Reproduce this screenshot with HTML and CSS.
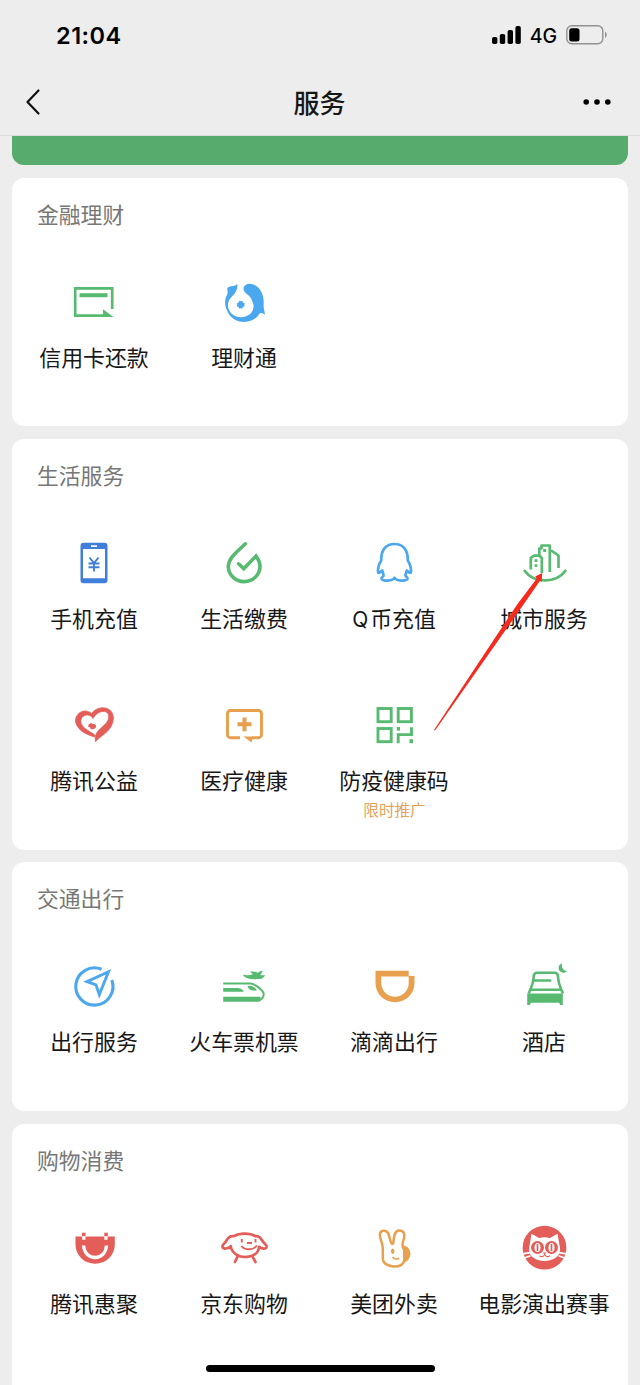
FILE: index.html
```html
<!DOCTYPE html>
<html lang="zh-CN">
<head>
<meta charset="utf-8">
<title>服务</title>
<link rel="stylesheet" href="styles.css">
</head>
<body>
<div class="screen">
  <header class="header">
    <div class="status">
      <span class="time">21:04</span>
      <div class="status-right">
        <svg class="signal" width="30" height="20" viewBox="0 0 30 20"><rect x="0" y="12" width="5.4" height="7" rx="1.8"/><rect x="7.8" y="9" width="5.4" height="10" rx="1.8"/><rect x="15.6" y="5" width="5.4" height="14" rx="1.8"/><rect x="23.4" y="1" width="5.4" height="18" rx="1.8"/></svg>
        <span class="network">4G</span>
        <svg class="battery" width="42" height="20" viewBox="0 0 42 20"><rect x=".8" y=".8" width="36" height="18" rx="5" fill="none" stroke="#929292" stroke-width="1.4"/><rect x="3.2" y="3.2" width="10.3" height="13.2" rx="2.5"/><path d="M39 6.500c2.300 1.500 2.300 5 0 6.500z" fill="#929292"/></svg>
      </div>
    </div>
    <div class="nav">
      <svg class="back" width="16" height="28" viewBox="0 0 16 28"><path d="M13.500 2.500 2.500 14l11 11.500" fill="none" stroke="#111" stroke-width="2.200" stroke-linecap="round" stroke-linejoin="round"/></svg>
      <h1 class="title">服务</h1>
      <svg class="more" width="30" height="8" viewBox="0 0 30 8"><circle cx="4.200" cy="4" r="2.800"/><circle cx="15" cy="4" r="2.800"/><circle cx="25.800" cy="4" r="2.800"/></svg>
    </div>
  </header>

  <main class="content">
    <div class="banner"></div>

    <section class="card">
      <h2 class="card-title">金融理财</h2>
      <div class="grid">
        <div class="item">
          <svg class="icon green" viewBox="0 0 48 48"><path d="M42.200 31V10.300H5.200V37.700H34" class="line" stroke-width="2.700"/><path d="M9.500 17.200H37.500" class="line" stroke-width="4"/><path d="M33 31.300 43.500 38.900H33z"/></svg>
          <span class="label">信用卡还款</span>
        </div>
        <div class="item">
          <svg class="icon sky" viewBox="0 0 48 48"><path d="M17.200 6C14 9 10 7.500 7.800 9.500 6.500 11.500 8.500 14 7 17 4.500 21 4.500 27 7 32.500 10 40 17 44.200 24.500 44c6.500 0 12.500-3.500 15.500-9 1.500-.3 3.500 0 4.800 2C45 33 43.500 31 43.600 27 44.500 17 40 7 30 5.800 25 5.500 22.500 9.500 24 12.800c1.500 3.200 6.500 4.700 8 9.700.5 2 2 4 1.500 6.500C33 35 27.500 39.300 21 39.300 13.500 39.300 8 34 8 27.500 8 20.500 13 18.500 15.200 14.500 17 12 17.800 9 17.200 6z"/><path d="M19 23.300h3.400v1.700h1.700v3.400h-1.700v1.700H19v-1.700h-1.700V25H19z" stroke="currentColor" stroke-width=".6" stroke-linejoin="round"/></svg>
          <span class="label">理财通</span>
        </div>
      </div>
    </section>

    <section class="card card-tall">
      <h2 class="card-title">生活服务</h2>
      <div class="grid">
        <div class="item">
          <svg class="icon blue" viewBox="0 0 48 48"><path fill-rule="evenodd" d="M13.500 3.800h21a3 3 0 0 1 3 3v34.400a3 3 0 0 1-3 3h-21a3 3 0 0 1-3-3V6.800a3 3 0 0 1 3-3zM13 10v29.200h22V10zM21 6.200v1.700h6V6.200z"/><path class="line" stroke-width="1.900" d="m19.500 18.500 4.500 5.700 4.500-5.700M18.500 24.500h11M18.500 28.200h11M24 24v8.500"/></svg>
          <span class="label">手机充值</span>
        </div>
        <div class="item">
          <svg class="icon green" viewBox="0 0 48 48"><path class="line" stroke-width="3.600" stroke-linecap="round" d="M25.300 4.800C18.500 11.800 8.300 18.300 8.300 28A15.800 15.200 0 0 0 24.200 42.600 15.800 15.200 0 0 0 40 27.800C40 23.500 38.200 20 36 17L23.800 29.800 18.600 24.800"/></svg>
          <span class="label">生活缴费</span>
        </div>
        <div class="item">
          <svg class="icon sky" viewBox="0 0 48 48"><path class="line" stroke-width="2.700" stroke-linecap="round" stroke-linejoin="round" d="M12.300 31.500C10.500 33 9.200 34.200 8.300 33.800 7.300 31.500 8.500 25.500 11.200 21.500 11 11 15.500 5 24.500 5s13.500 6 13.300 16.500c2.700 4 3.900 10 2.900 12.300-.9.400-2.200-.8-4-2.300M12.500 32c.2 2.300 1.200 3.500 1 4.500-.3 1.600-2.400 1.200-2 3.300.5 2.200 8.500 2.700 12 .2l1-1.300 1 1.300c3.500 2.500 11.500 2 12-.2.400-2.100-1.700-1.700-2-3.300-.2-1 .8-2.200 1-4.500"/></svg>
          <span class="label"><span class="latin">Q</span>币充值</span>
        </div>
        <div class="item anchor">
          <svg class="icon green" viewBox="0 0 48 48"><g class="line" stroke-width="2.700" stroke-linejoin="round"><path d="M10.800 30.500V18.800L14 16.700h5.500l2.300 2.300V34"/><path d="M19.300 16.500V9.500h2.200V6.500h8.300v26.500M30.500 11.800 32 12l6.500 4.500V29"/><path d="M4.700 31.800C13 44 36 45 45.400 31.800" stroke-linecap="round"/></g><rect x="23.200" y="10" width="3" height="3"/><rect x="14.600" y="20.200" width="2.800" height="2.800"/><rect x="14.600" y="25.200" width="2.800" height="2.800"/></svg>
          <span class="label">城市服务</span>
          <svg class="arrow" width="112" height="160" viewBox="0 0 112 160"><path d="M0 158 83.500 32 102.800 6.500 101.300 4.500 108.200 1 107.700 10 106 8.700 88.500 34 1 158.500z" fill="#f52a1c"/></svg>
        </div>
        <div class="item">
          <svg class="icon red" viewBox="0 0 48 48"><path d="M25.500 40.700C24.500 35.500 26 32 29 29 33 25 38.500 21.500 38.700 16 38.800 12 36.500 10.500 33 10.500 29 10.500 25.500 13.500 23 17.500 21 13.500 15 12.500 12 16.500c-2.500 4-.5 8 3 11C18 30 22 31.500 25 34.200L24.500 36C17 33.800 8.500 29.800 6 22.500 3.800 15.500 9.500 10 15 10c2.500 0 4.800.9 6.700 2.400C25 7.500 32 5.500 37 7.500c6.300 2.500 7.800 8.700 5.200 15.500C39.500 31 31 34.500 25.500 40.700z" stroke="currentColor" stroke-width=".7"/><path d="M18.500 24c1-2 3.500-2.500 4.500-.8 1.700-.8 3.500.8 3 2.700-.6 2-3.500 2.400-5.500 2.200.2-1.800-1-2.500-2.500-2.200z"/></svg>
          <span class="label">腾讯公益</span>
        </div>
        <div class="item">
          <svg class="icon orange" viewBox="0 0 48 48"><path class="line" stroke-width="2.900" d="M20 36.700H10.500a3 3 0 0 1-3-3V12.500a3 3 0 0 1 3-3h28a3 3 0 0 1 3 3v21.200a3 3 0 0 1-3 3H32"/><path class="line" stroke-width="4" d="M17.500 23.300h14M24.500 16.500v13.700"/><path d="M23.500 35.400H33L31.500 41.500z"/></svg>
          <span class="label">医疗健康</span>
        </div>
        <div class="item">
          <svg class="icon green" viewBox="0 0 48 48"><g class="line" stroke-width="2.900"><rect x="8" y="7.500" width="13.200" height="13.200"/><rect x="28.200" y="7.500" width="13.200" height="13.200"/><rect x="8" y="27.500" width="13.200" height="13.200"/><path d="M28.200 42.200v-8.600h13.300v-7.300"/></g><rect x="26.800" y="26" width="3.200" height="3.600"/><rect x="39.500" y="38.200" width="3.500" height="4"/></svg>
          <span class="label">防疫健康码</span>
          <span class="tag">限时推广</span>
        </div>
      </div>
    </section>

    <section class="card">
      <h2 class="card-title">交通出行</h2>
      <div class="grid">
        <div class="item">
          <svg class="icon sky" viewBox="0 0 48 48"><path class="line" stroke-width="3.100" d="M31.500 7.300A18.600 18.600 0 1 0 41.800 18"/><path class="line" stroke-width="2.900" d="M38.500 9.800 17 19.600l9 3.200 3.300 9.700z"/></svg>
          <span class="label">出行服务</span>
        </div>
        <div class="item">
          <svg class="icon green" viewBox="0 0 48 48"><path d="M22.500 12.700c4 .6 7 .8 10.500-.4l-3-2.600c3.800-.6 5.700.2 8 1C39.500 9.200 41.300 8.500 42.500 8.700c-.3 1.800-1 3-2.300 4.300 1.700.4 3.300.4 4.900.2-1.600 3.200-4.600 4.200-8.100 3.800-5 .8-11 0-14.500-4.300z"/><path class="line" stroke-width="2" d="M3.200 21.600H31C36 22.500 43.600 28.500 43.700 32.300c0 3-2.400 5.200-4.700 6.200"/><path d="M27.500 24c3-.7 7-.3 9.500 4.500-3.800.5-8.500 0-9.500-4.500zM3.200 26H18c3.200.4 5 1.600 5.700 3.700H3.200zM3.200 34.700h37.500l-1.200 5H3.200z"/></svg>
          <span class="label">火车票机票</span>
        </div>
        <div class="item">
          <svg class="icon orange" viewBox="0 0 48 48"><path d="M5.500 8.700h33.200v5.400h5.800v7a19.500 19.200 0 0 1-39 0zM11.300 14.600v6.500a13.700 13.700 0 0 0 27.400 0v-6.500z" fill-rule="evenodd"/></svg>
          <span class="label">滴滴出行</span>
        </div>
        <div class="item">
          <svg class="icon green" viewBox="0 0 48 48"><path class="line" stroke-width="2.600" d="M8.700 31.500c2.500-6 4.700-9 5-16.500 0-2.900 1-4.200 3.500-4.200h17.300c2.500 0 3.500 1.300 3.500 4.200.3 7.500 2.500 10.500 5 16.500M13.800 18.500h17.500M10.500 27.700h31"/><path d="M7.200 31.500h35.600V43h-2.500l-1.200-2.300H10.900L9.700 43H7.200z"/><path d="M42 1.300c-.8 4 1.100 7.600 5 7.600-3 3.500-8.400 1.400-8.400-2.800 0-2.500 1.500-4.200 3.400-4.800z"/></svg>
          <span class="label">酒店</span>
        </div>
      </div>
    </section>

    <section class="card card-last">
      <h2 class="card-title">购物消费</h2>
      <div class="grid">
        <div class="item">
          <svg class="icon red" viewBox="0 0 48 48"><path d="M5.500 12.500h6.700v3.200h3.300v-3.200h18.800v3.200h3.300v-3.200h7.200v8.200a19.600 19 0 0 1-39.300 0z"/><rect x="12" y="8.700" width="3.500" height="3.500"/><rect x="34.300" y="8.700" width="3.500" height="3.500"/><path d="M13.700 21.500c.7 16 22 16 22.700 0" fill="none" stroke="#fff" stroke-width="3.300"/></svg>
          <span class="label">腾讯惠聚</span>
        </div>
        <div class="item">
          <svg class="icon red" viewBox="0 0 48 48"><g class="line" stroke-width="2.700" stroke-linejoin="round" stroke-linecap="round"><path d="M14 12.200c5.500-3.500 16-3.500 21.200 0 3.300-.8 5.500 1.500 7.300 4.800 1.500 2.700 4.300 3.500 4 6-.5 2.300-5 2-7.500-.2C38.500 29.500 32.500 33 24.700 33 18 33 11.500 28.500 10.700 22.200 8.500 24.800 3.200 25.500 2.500 22.800 2 20.800 5 19.300 6.500 16.500 8.200 13.300 10.500 11.500 14 12.200z"/><path d="M17.500 32.700 15 38M32.500 32.700l3 5.300"/></g><path class="line" stroke-width="1.900" d="M21.800 15v3.500M35.500 15v3.500M27 19H32M21.500 22c3.200 4.500 12 4.500 15.300-.5"/></svg>
          <span class="label">京东购物</span>
        </div>
        <div class="item">
          <svg class="icon orange" viewBox="0 0 48 48"><path class="line" stroke-width="2.500" stroke-linejoin="round" d="M12.600 22.500C12 17.500 9.500 14 9.800 10.200c.5-4.400 6.400-4.700 8.400-.9 1.500 3 1.500 6.500 3.200 9.900.6 1.200 1.700.8 1.900-.5.700-4.500.5-11.900 5.700-12.200 4.600-.1 6.200 3.200 5 7.700-.8 3-2.400 5.800-1.300 8.800 3 4 3.300 10 1.300 14.500-1.500 3.300-5.500 5.100-9.500 5.100-5.500-.3-10.800-2.700-11.500-6.600-.5-4.500.1-8.500-.4-13.500z"/><path d="M34 21.500c8.500 2 8.500 14.500 0 17-1.500-4.500-1.500-12.500 0-17z"/><ellipse cx="22.700" cy="27.300" rx="1.700" ry="2.700"/><path class="line" stroke-width="1.600" d="M22.500 33c1.500 2 4.300 2.700 6.700 1.200"/></svg>
          <span class="label">美团外卖</span>
        </div>
        <div class="item">
          <svg class="icon red" viewBox="0 0 48 48"><circle cx="24.500" cy="23.700" r="21.900"/><path fill="#fff" d="M11.500 9.700 19 14c3.500-.9 7.500-.9 11 0l7.500-4.300L40 24c1 8-6.500 13-15.500 13S8 32 9.200 24z"/><path d="M2.500 29.800 10 28.700M3.500 34.200 10.500 31.700M46.500 29.800 39 28.700M45.500 34.200l-7-2.500" stroke="#fff" stroke-width="1.700"/><circle cx="17.500" cy="23.500" r="6.500"/><circle cx="31.500" cy="23.500" r="6.500"/><ellipse cx="17.500" cy="23.500" rx="3" ry="4.600" fill="#fff"/><ellipse cx="31.500" cy="23.500" rx="3" ry="4.600" fill="#fff"/><path d="M17.500 20v7M31.500 20v7" class="line" stroke-width="1.700"/><path d="M22.700 28.500h3.700l-1.800 2z"/><path class="line" stroke-width="1.100" d="M19.500 31.700c2 1.600 4 1.200 5.200-1.200 1.200 2.400 3.200 2.800 5.200 1.200"/></svg>
          <span class="label">电影演出赛事</span>
        </div>
      </div>
    </section>
  </main>
  <div class="home-indicator"></div>
</div>
</body>
</html>
```

FILE: styles.css
```css
* { box-sizing: border-box; }
body {
  margin: 0;
  background: #ededed;
  color: #171717;
  font-family: "Noto Sans CJK SC", sans-serif;
}
.screen {
  position: relative;
  width: 640px;
  height: 1385px;
  overflow: hidden;
}
.header {
  height: 136px;
  border-bottom: 1px solid #dcdcdc;
}
.status {
  display: flex;
  justify-content: space-between;
  align-items: center;
  height: 70px;
  padding: 0 32px 0 56px;
}
.time {
  margin-top: 1px;
  font: 600 23.5px/28px Inter, sans-serif;
  letter-spacing: 0.5px;
  color: #000;
}
.status-right {
  display: flex;
  align-items: center;
}
.network {
  margin: 1px 9px 0 8px;
  font: 500 19.5px/24px Inter, sans-serif;
  color: #000;
}
.nav {
  display: grid;
  grid-template-columns: 1fr auto 1fr;
  align-items: center;
  height: 64px;
  padding: 0 28px 0 25px;
}
.title {
  margin: 0 0 1px 2px;
  font-size: 26px;
  line-height: 36px;
  font-weight: 500;
}
.more { justify-self: end; }
.content {
  display: flex;
  flex-direction: column;
  gap: 12.4px;
  padding: 0 12.5px 0 12px;
}
.banner {
  height: 29.3px;
  border-radius: 0 0 12px 12px;
  background: #57ab6d;
}
.card {
  height: 248.7px;
  flex: none;
  padding: 19px 7px 0;
  border-radius: 12px;
  background: #fff;
}
.card-tall { height: 411.3px; }
.card-last {
  height: 270px;
  border-radius: 12px 12px 0 0;
}
.card-title {
  margin: 0 0 48px 18px;
  font-size: 21.8px;
  line-height: 33px;
  font-weight: 400;
  color: #777;
}
.grid {
  display: grid;
  grid-template-columns: repeat(4, 150px);
  grid-auto-rows: 162px;
}
.item {
  display: flex;
  flex-direction: column;
  align-items: center;
}
.anchor { position: relative; }
.icon {
  width: 48px;
  height: 48px;
  fill: currentColor;
}
.line {
  fill: none;
  stroke: currentColor;
}
.green { color: #57ba70; }
.sky { color: #4ba7ee; }
.blue { color: #3f7fd9; }
.red { color: #e35d59; }
.orange { color: #e8a04e; }
.label {
  margin-top: 14px;
  font-size: 21.9px;
  line-height: 33px;
  white-space: nowrap;
}
.latin {
  margin-right: 2px;
  font-family: Inter, sans-serif;
  font-size: 21px;
  line-height: 1;
}
.tag {
  margin-top: 2px;
  margin-left: 1px;
  font-size: 15.6px;
  line-height: 23px;
  color: #e3a35b;
}
.arrow {
  position: absolute;
  left: -35px;
  top: 33px;
}
.home-indicator {
  position: absolute;
  left: 206px;
  bottom: 13px;
  width: 229px;
  height: 7px;
  border-radius: 4px;
  background: #000;
}
```
